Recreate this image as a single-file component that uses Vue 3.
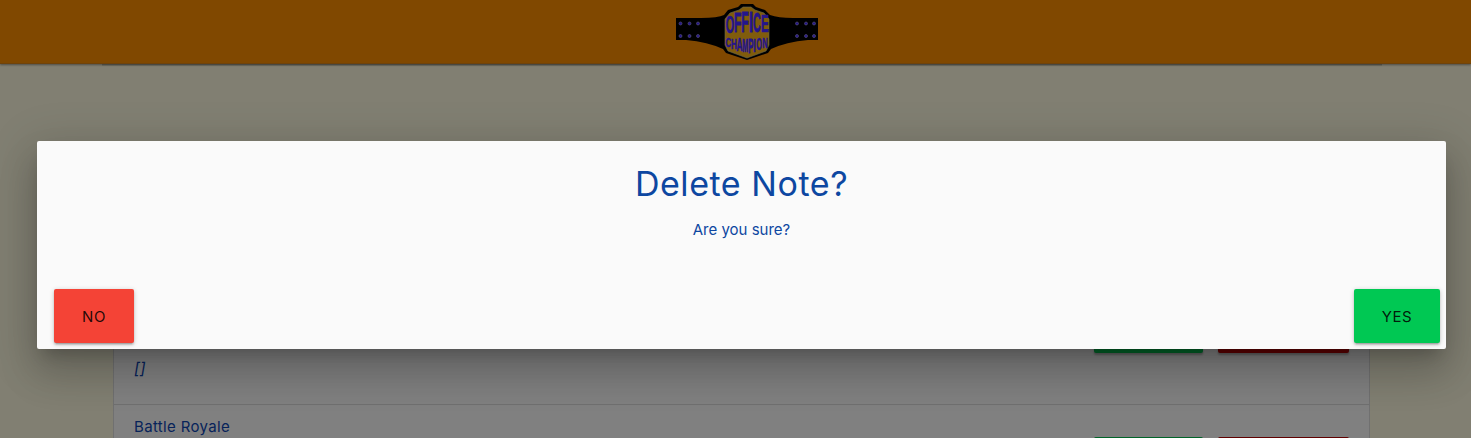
<script setup>
const rivets = [
  [680.5, 23.5], [689.5, 23.5], [698, 23.5], [680.5, 36], [689.5, 36], [698, 36],
  [797, 23.5], [806, 23.5], [814, 23.5], [797, 36], [806, 36], [814, 36]
]
// Each letter: character, left edge, baseline, horizontal and vertical scale, font size
const letters = [
  ['O', 725.8, 32.5, 0.6, 1.34, 18], ['F', 734, 32, 0.68, 1.56, 18], ['F', 741.3, 31.5, 0.68, 1.6, 18],
  ['I', 749, 31.5, 0.85, 1.66, 18], ['C', 753, 32, 0.6, 1.55, 18], ['E', 761, 32, 0.66, 1.36, 18],
  ['C', 725.5, 46.8, 0.6, 0.98, 13], ['H', 731, 48.8, 0.62, 1.15, 13], ['A', 736.4, 50.8, 0.64, 1.34, 13],
  ['M', 742.2, 52.2, 0.54, 1.45, 13], ['P', 748.2, 52.7, 0.6, 1.5, 13], ['I', 753.3, 51.8, 0.7, 1.42, 13],
  ['O', 756.2, 50, 0.56, 1.25, 13], ['N', 762.2, 48, 0.6, 1.08, 13]
]
</script>

<template>
  <div class="page">
    <nav class="nav">
      <svg class="logo" width="144" height="60" viewBox="675 2 144 60">
        <path d="M676 18H701Q718 18 724 15L728 10L738 7L741 4H753L756 7L765 10L770 15Q778 18 793 18H818V40H808Q786 42 771 49L768 53L747 60L726 53L723 49Q708 42 686 40H676Z" fill="#000" />
        <path d="M730 13L739 10L743 7H751L755 10L764 13L769 19V45L766 51L747 58L728 51L725 45V19Z" fill="#805c0c" stroke="#6c6b50" stroke-width=".6" />
        <circle v-for="(r, i) in rivets" :key="i" :cx="r[0]" :cy="r[1]" r="1.5" fill="#24158c" stroke="#555078" stroke-width=".7" />
        <g class="logo-text">
          <text
            v-for="(l, i) in letters"
            :key="i"
            :transform="`translate(${l[1]} ${l[2]}) scale(${l[3]} ${l[4]})`"
            :font-size="l[5]"
          >{{ l[0] }}</text>
        </g>
      </svg>
    </nav>
    <main class="content">
      <div class="edge"></div>
      <ul class="collection">
        <li class="item">
          <div class="note"><em>[]</em></div>
          <div class="actions"><span class="bar green"></span><span class="bar red"></span></div>
        </li>
        <li class="item">
          <div class="note name">Battle Royale</div>
          <div class="actions"><span class="bar green"></span><span class="bar red"></span></div>
        </li>
      </ul>
    </main>
    <section class="modal" role="dialog">
      <h4 class="title">Delete Note?</h4>
      <p class="question">Are you sure?</p>
      <footer class="footer">
        <button class="btn no">NO</button>
        <button class="btn yes">YES</button>
      </footer>
    </section>
  </div>
</template>

<style>
body { margin: 0; overflow: hidden; }
</style>

<style scoped>
.page {
  position: relative;
  height: 438px;
  overflow: hidden;
  background: #817f72;
  color: #07235a;
  font-family: Inter, "Liberation Sans", sans-serif;
  font-size: 15px;
}
.nav {
  position: relative;
  height: 64px;
  background: linear-gradient(#804800 63px, #6f430b 63px);
  display: flex;
  justify-content: center;
  box-shadow: 0 1px 2px rgba(0, 0, 0, .4);
}
.logo { display: block; margin: 2px 0 0 23px; }
.logo-text {
  font-family: "Liberation Sans", sans-serif;
  font-weight: 700;
  fill: #24158c;
  stroke: #24158c;
  stroke-width: .5;
}
.content {
  margin: 0 89px 0 102px;
  height: 374px;
  box-sizing: border-box;
}
.edge {
  height: 2px;
  background: linear-gradient(rgba(0, 0, 0, .28), rgba(0, 0, 0, .06));
}
.collection {
  margin: 214px 12px 0 11px;
  padding: 0;
  list-style: none;
  border: 1px solid #707070;
  background: #808080;
}
.item {
  height: 123px;
  border-bottom: 1px solid #707070;
  display: flex;
  justify-content: space-between;
  padding: 0 20px;
}
.note { padding-top: 77px; line-height: 20px; }
.name { letter-spacing: .35px; }
.note em { font-size: 16px; }
.item + .item .note { padding-top: 12px; }
.actions { display: flex; gap: 15px; padding-top: 18px; }
.item + .item .actions { padding-top: 32px; }
.bar { height: 54px; border-radius: 2px; box-shadow: 0 2px 2px rgba(0, 0, 0, .25); }
.green { width: 109px; background: #006428; }
.red { width: 131px; background: #600000; }
.modal {
  position: absolute;
  left: 37px;
  top: 141px;
  width: 1409px;
  height: 208px;
  background: #fafafa;
  border-radius: 2px;
  color: #0d47a1;
  text-align: center;
  box-shadow: 0 24px 38px 3px rgba(0, 0, 0, .14), 0 9px 46px 8px rgba(0, 0, 0, .12), 0 11px 15px -7px rgba(0, 0, 0, .2);
}
.title {
  margin: 0;
  padding-top: 24px;
  font-size: 34px;
  line-height: 38px;
  font-weight: 400;
  letter-spacing: .55px;
}
.question { margin: 17px 0 0; font-size: 15px; line-height: 20px; }
.footer { display: flex; justify-content: space-between; margin-top: 49px; padding: 0 6px 0 17px; }
.btn {
  height: 54px;
  border: 0;
  border-radius: 2px;
  padding: 0;
  font: 400 15px Inter, "Liberation Sans", sans-serif;
  letter-spacing: .5px;
  color: rgba(0, 0, 0, .87);
  box-shadow: 0 2px 2px rgba(0, 0, 0, .14), 0 3px 1px -2px rgba(0, 0, 0, .12), 0 1px 5px rgba(0, 0, 0, .2);
}
.no { width: 80px; background: #f44336; }
.yes { width: 86px; background: #00c853; }
</style>
